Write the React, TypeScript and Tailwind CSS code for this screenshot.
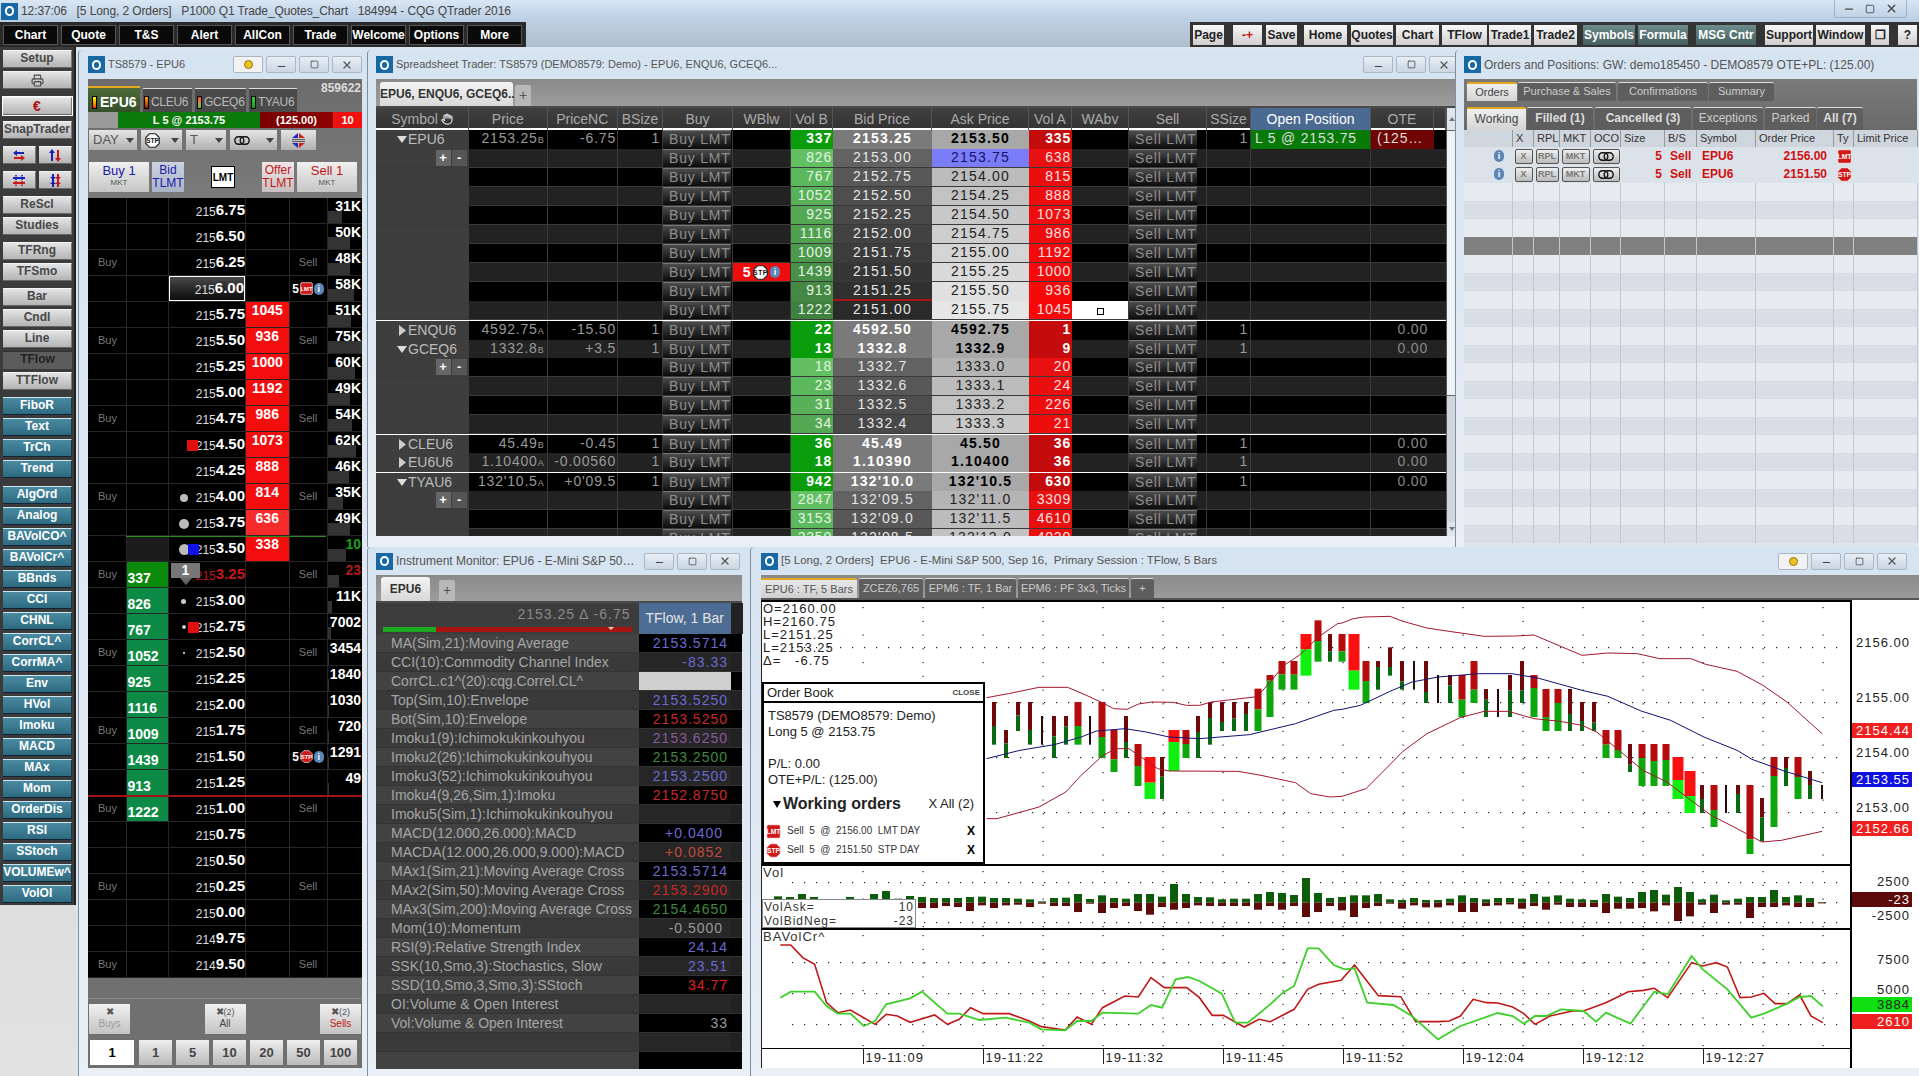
import { ReactNode } from 'react';
import { Printer, Minus, Square, X, Hand } from 'lucide-react';

// ---- small shared bits

const WinIcon = () => (
  <div className="w-[17px] h-[17px] bg-[#1769a6] flex items-center justify-center shrink-0">
    <div className="w-[9px] h-[10px] rounded-full border-2 border-white" />
  </div>
);

const TitleBtn = ({ children, light }: { children: ReactNode; light?: boolean }) => (
  <div className={`w-[30px] h-[17px] rounded-[2px] border border-[#aab6c4] flex items-center justify-center ${light ? 'bg-[#f2f2f2]' : 'bg-gradient-to-b from-[#e8eef5] to-[#cbd6e2]'}`}>
    {children}
  </div>
);

const WinButtons = ({ dot }: { dot?: boolean }) => (
  <div className="flex gap-[3px] shrink-0">
    {dot && (
      <TitleBtn light>
        <div className="w-[9px] h-[9px] rounded-full bg-[#f2c21c] border border-[#8a7420]" />
      </TitleBtn>
    )}
    <TitleBtn><Minus size={11} strokeWidth={2.5} className="text-[#444] mt-[3px]" /></TitleBtn>
    <TitleBtn><Square size={9} strokeWidth={2} className="text-[#444]" /></TitleBtn>
    <TitleBtn><X size={12} strokeWidth={2.5} className="text-[#555]" /></TitleBtn>
  </div>
);

const StopSign = ({ size = 13 }: { size?: number }) => (
  <svg width={size} height={size} viewBox="0 0 20 20" className="shrink-0">
    <polygon points="6,1 14,1 19,6 19,14 14,19 6,19 1,14 1,6" fill="#d01818" stroke="#fff" strokeWidth="1" />
    <text x="10" y="13.5" textAnchor="middle" fontSize="9" fontWeight="700" fill="#fff" fontFamily="Liberation Sans">STP</text>
  </svg>
);

const WhiteStop = ({ size = 15 }: { size?: number }) => (
  <svg width={size} height={size} viewBox="0 0 20 20" className="shrink-0">
    <polygon points="6,1 14,1 19,6 19,14 14,19 6,19 1,14 1,6" fill="#fff" stroke="#222" strokeWidth="1.5" />
    <text x="10" y="13.5" textAnchor="middle" fontSize="9" fontWeight="700" fill="#111" fontFamily="Liberation Sans">STP</text>
  </svg>
);

const LmtBadge = ({ size = 13 }: { size?: number }) => (
  <svg width={size} height={size} viewBox="0 0 20 20" className="shrink-0">
    <rect x="1" y="1" width="18" height="18" rx="2" fill="#d01818" stroke="#fff" strokeWidth="1" />
    <text x="10" y="13.5" textAnchor="middle" fontSize="9" fontWeight="700" fill="#fff" fontFamily="Liberation Sans">LMT</text>
  </svg>
);

const InfoDot = () => (
  <div className="w-[10px] h-[12px] rounded-full bg-[#5c86b4] text-white text-[9px] font-bold leading-[12px] text-center shrink-0">i</div>
);

const Chain = () => (
  <svg width="16" height="9" viewBox="0 0 16 9">
    <rect x="0.8" y="0.8" width="9" height="7.4" rx="3.6" fill="none" stroke="#111" strokeWidth="1.4" />
    <rect x="6.2" y="0.8" width="9" height="7.4" rx="3.6" fill="none" stroke="#111" strokeWidth="1.4" />
  </svg>
);

const SplitIcon = () => (
  <svg width="15" height="15" viewBox="0 0 15 15">
    <polygon points="1,5 7,5 7,0" fill="#2028c0" />
    <polygon points="8,0 8,5 14,5" fill="#d02020" />
    <rect x="1" y="6" width="13" height="1" fill="#555" />
    <rect x="1" y="8" width="13" height="1" fill="#555" />
    <polygon points="1,10 7,10 7,15" fill="#2028c0" />
    <polygon points="8,15 8,10 14,10" fill="#d02020" />
  </svg>
);

// ---- top bars

const leftTop = ['Chart', 'Quote', 'T&S', 'Alert', 'AllCon', 'Trade', 'Welcome', 'Options', 'More'];

const rightTop = [
  { t: 'Page', c: 'w-[31px] ml-[0px]' },
  { t: '-+', c: 'w-[29px] ml-[9px] text-[#c01010]' },
  { t: 'Save', c: 'w-[31px] ml-[4px]' },
  { t: 'Home', c: 'w-[43px] ml-[7px]' },
  { t: 'Quotes', c: 'w-[42px] ml-[4px]' },
  { t: 'Chart', c: 'w-[43px] ml-[3px]' },
  { t: 'TFlow', c: 'w-[45px] ml-[3px]' },
  { t: 'Trade1', c: 'w-[42px] ml-[2px]' },
  { t: 'Trade2', c: 'w-[43px] ml-[3px]' },
  { t: 'Symbols', c: 'w-[52px] ml-[6px] teal' },
  { t: 'Formula', c: 'w-[50px] ml-[3px] teal' },
  { t: 'MSG Cntr', c: 'w-[60px] ml-[8px] teal' },
  { t: 'Support', c: 'w-[48px] ml-[9px]' },
  { t: 'Window', c: 'w-[49px] ml-[3px]' },
  { t: '❐', c: 'w-[18px] ml-[6px]' },
  { t: '?', c: 'w-[19px] ml-[9px]' },
];

const TopBars = () => (
  <>
    <div className="h-[22px] bg-gradient-to-b from-[#d9e6f4] to-[#b9cde2] flex items-center pl-[1px] text-[12px] tracking-[-0.1px] text-[#444]">
      <WinIcon />
      <span className="ml-[3px] whitespace-pre">12:37:06   [5 Long, 2 Orders]   P1000 Q1 Trade_Quotes_Chart   184994 - CQG QTrader 2016</span>
      <div className="ml-auto mr-[12px] flex items-center gap-[10px] border border-[#9fb0c4] border-t-0 rounded-b-[3px] h-[18px] px-[8px] -mt-[4px] text-[#444]">
        <Minus size={12} strokeWidth={2.5} />
        <Square size={10} strokeWidth={2} />
        <X size={13} strokeWidth={2.5} />
      </div>
    </div>
    <div className="h-[25px] flex bg-[#c3d2e1]">
      <div className="w-[526px] bg-[#2a2a2a] flex items-center gap-[3px] pl-[3px]">
        {leftTop.map(t => (
          <div key={t} className="w-[55px] h-[20px] bg-[#0a0a0a] border border-[#555] text-white font-bold text-[12px] flex items-center justify-center">{t}</div>
        ))}
      </div>
      <div className="flex-1 bg-gradient-to-b from-[#bfcfe0] to-[#aebecd]" />
      <div className="w-[729px] bg-[#333] flex items-center pl-[3px]">
        {rightTop.map(b => {
          const teal = b.c.includes('teal');
          return (
            <div key={b.t} className={`${b.c} h-[20px] font-bold text-[12px] flex items-center justify-center whitespace-nowrap ${teal ? 'bg-gradient-to-b from-[#6e8c8c] to-[#465f5f] text-white' : 'bg-gradient-to-b from-[#f8f8f8] to-[#cfcfcf] text-[#222]'}`}>{b.t}</div>
          );
        })}
      </div>
    </div>
  </>
);

// ---- left side toolbar

const Arrow = ({ kind }: { kind: 'h' | 'v' | 'hx' | 'vx' }) => (
  <svg width="14" height="13" viewBox="0 0 14 13">
    {kind === 'h' && (
      <>
        <path d="M1 4 L5 1 V3 H12 V5 H5 V7 Z" fill="#1820b8" />
        <path d="M13 9 L9 6 V8 H2 V10 H9 V12 Z" fill="#c81818" />
      </>
    )}
    {kind === 'v' && (
      <>
        <path d="M4 0 L7 4 H5 V12 H3 V4 H1 Z" fill="#1820b8" />
        <path d="M10 13 L7 9 H9 V1 H11 V9 H13 Z" fill="#c81818" />
      </>
    )}
    {kind === 'hx' && (
      <>
        <rect x="1" y="3" width="12" height="2" fill="#1820b8" />
        <path d="M3 1 L5 6 H3 L5 1 Z M9 1 L11 6 H9 L11 1 Z" fill="#1820b8" />
        <rect x="1" y="8" width="12" height="2" fill="#c81818" />
        <path d="M3 7 L5 12 H3 L5 7 Z M9 7 L11 12 H9 L11 7 Z" fill="#c81818" />
      </>
    )}
    {kind === 'vx' && (
      <>
        <rect x="4" y="0" width="2" height="13" fill="#1820b8" />
        <path d="M2 3 H8 L5 6 Z M2 10 H8 L5 7 Z" fill="#1820b8" />
        <rect x="9" y="0" width="2" height="13" fill="#c81818" />
        <path d="M7 3 H13 L10 6 Z M7 10 H13 L10 7 Z" fill="#c81818" />
      </>
    )}
  </svg>
);

const grayBtn = 'bg-gradient-to-b from-[#e4e4e4] to-[#b4b4b4] text-[#484848] border-t border-[#f4f4f4] border-r border-r-[#777] border-b border-b-[#666]';
const tealBtn = 'bg-gradient-to-b from-[#4a8ba2] to-[#2d6a80] text-white border-t border-[#cfe6ee] border-r border-r-[#234] border-b border-b-[#123]';

const SideBtn = ({ label, mb, teal, dark }: { label: string; mb: string; teal?: boolean; dark?: boolean }) => (
  <div className={`h-[18px] w-[69px] font-bold text-[12px] leading-[15px] text-center whitespace-nowrap overflow-hidden ${mb} ${dark ? 'bg-[#5c5c5c] text-[#222] border-t border-[#333]' : teal ? tealBtn : grayBtn}`}>{label}</div>
);

const teals = ['FiboR', 'Text', 'TrCh', 'Trend'];
const teals2 = ['AlgOrd', 'Analog', 'BAVolCO^', 'BAVolCr^', 'BBnds', 'CCI', 'CHNL', 'CorrCL^', 'CorrMA^', 'Env', 'HVol', 'Imoku', 'MACD', 'MAx', 'Mom', 'OrderDis', 'RSI', 'SStoch', 'VOLUMEw^', 'VolOI'];

const SideBar = () => (
  <div className="w-[76px] shrink-0 flex flex-col bg-gradient-to-b from-[#c9c9c9] to-[#e2e2e2]">
    <div className="bg-[#3b3b3b] pl-[3px] pt-[3px] h-[858px] border-r-2 border-[#222]">
      <SideBtn label="Setup" mb="mb-[3px]" />
      <div className={`h-[18px] w-[69px] flex items-center justify-center mb-[8px] ${grayBtn}`}><Printer size={13} /></div>
      <div className={`h-[18px] w-[69px] flex items-center justify-center mb-[6px] ${grayBtn} font-bold text-[#b01010] text-[14px] outline outline-1 outline-white`}>€</div>
      <SideBtn label="SnapTrader" mb="mb-[7px]" />
      <div className="flex gap-[3px] mb-[7px]">
        <div className={`h-[18px] w-[33px] flex items-center justify-center ${grayBtn}`}><Arrow kind="h" /></div>
        <div className={`h-[18px] w-[33px] flex items-center justify-center ${grayBtn}`}><Arrow kind="v" /></div>
      </div>
      <div className="flex gap-[3px] mb-[7px]">
        <div className={`h-[18px] w-[33px] flex items-center justify-center ${grayBtn}`}><Arrow kind="hx" /></div>
        <div className={`h-[18px] w-[33px] flex items-center justify-center ${grayBtn}`}><Arrow kind="vx" /></div>
      </div>
      <SideBtn label="ReScl" mb="mb-[3px]" />
      <SideBtn label="Studies" mb="mb-[7px]" />
      <SideBtn label="TFRng" mb="mb-[3px]" />
      <SideBtn label="TFSmo" mb="mb-[7px]" />
      <SideBtn label="Bar" mb="mb-[3px]" />
      <SideBtn label="Cndl" mb="mb-[3px]" />
      <SideBtn label="Line" mb="mb-[3px]" />
      <SideBtn label="TFlow" mb="mb-[3px]" dark />
      <SideBtn label="TTFlow" mb="mb-[7px]" />
      {teals.map((t, i) => <SideBtn key={t} label={t} mb={i === 3 ? 'mb-[8px]' : 'mb-[3px]'} teal />)}
      {teals2.map(t => <SideBtn key={t} label={t} mb="mb-[3px]" teal />)}
    </div>
  </div>
);

// ---- price ladder

type LadderRow = {
  hi: string; lo: string; vol: string; bar: number;
  ask?: string; bid?: string; side?: boolean;
};

const ladder: LadderRow[] = [
  { hi: '215', lo: '6.75', vol: '31K', bar: 14 },
  { hi: '215', lo: '6.50', vol: '50K', bar: 22 },
  { hi: '215', lo: '6.25', vol: '48K', bar: 22, side: true },
  { hi: '215', lo: '6.00', vol: '58K', bar: 26 },
  { hi: '215', lo: '5.75', vol: '51K', bar: 23, ask: '1045' },
  { hi: '215', lo: '5.50', vol: '75K', bar: 34, ask: '936', side: true },
  { hi: '215', lo: '5.25', vol: '60K', bar: 27, ask: '1000' },
  { hi: '215', lo: '5.00', vol: '49K', bar: 22, ask: '1192' },
  { hi: '215', lo: '4.75', vol: '54K', bar: 24, ask: '986', side: true },
  { hi: '215', lo: '4.50', vol: '62K', bar: 28, ask: '1073' },
  { hi: '215', lo: '4.25', vol: '46K', bar: 21, ask: '888' },
  { hi: '215', lo: '4.00', vol: '35K', bar: 15, ask: '814', side: true },
  { hi: '215', lo: '3.75', vol: '49K', bar: 22, ask: '636' },
  { hi: '215', lo: '3.50', vol: '10', bar: 18, ask: '338' },
  { hi: '215', lo: '3.25', vol: '23', bar: 11, bid: '337', side: true },
  { hi: '215', lo: '3.00', vol: '11K', bar: 4, bid: '826' },
  { hi: '215', lo: '2.75', vol: '7002', bar: 3, bid: '767' },
  { hi: '215', lo: '2.50', vol: '3454', bar: 1, bid: '1052', side: true },
  { hi: '215', lo: '2.25', vol: '1840', bar: 1, bid: '925' },
  { hi: '215', lo: '2.00', vol: '1030', bar: 1, bid: '1116' },
  { hi: '215', lo: '1.75', vol: '720', bar: 1, bid: '1009', side: true },
  { hi: '215', lo: '1.50', vol: '1291', bar: 1, bid: '1439' },
  { hi: '215', lo: '1.25', vol: '49', bar: 1, bid: '913' },
  { hi: '215', lo: '1.00', vol: '', bar: 0, bid: '1222', side: true },
  { hi: '215', lo: '0.75', vol: '', bar: 0 },
  { hi: '215', lo: '0.50', vol: '', bar: 0 },
  { hi: '215', lo: '0.25', vol: '', bar: 0, side: true },
  { hi: '215', lo: '0.00', vol: '', bar: 0 },
  { hi: '214', lo: '9.75', vol: '', bar: 0 },
  { hi: '214', lo: '9.50', vol: '', bar: 0, side: true },
];

const Mark = ({ i }: { i: number }) => {
  if (i === 9) return <div className="absolute left-[18px] top-[8px] w-[11px] h-[11px] bg-[#e01010]" />;
  if (i === 11) return <div className="absolute left-[11px] top-[10px] w-[8px] h-[8px] rounded-full bg-[#bbb]" />;
  if (i === 12) return <div className="absolute left-[10px] top-[9px] w-[10px] h-[10px] rounded-full bg-[#bbb]" />;
  if (i === 13)
    return (
      <>
        <div className="absolute left-[10px] top-[8px] w-[11px] h-[11px] rounded-full bg-[#bbb]" />
        <div className="absolute left-[19px] top-[8px] w-[11px] h-[11px] bg-[#1010e8]" />
      </>
    );
  if (i === 14)
    return (
      <div className="absolute left-[2px] top-[1px] flex flex-col items-center w-[29px]">
        <div className="w-[29px] h-[15px] bg-[#777] text-white font-bold text-[14px] leading-[15px] text-center">1</div>
        <div className="w-0 h-0 border-l-[6px] border-r-[6px] border-t-[7px] border-l-transparent border-r-transparent border-t-[#666]" />
      </div>
    );
  if (i === 15) return <div className="absolute left-[12px] top-[11px] w-[5px] h-[5px] rounded-full bg-[#ccc]" />;
  if (i === 16)
    return (
      <>
        <div className="absolute left-[13px] top-[11px] w-[4px] h-[4px] rounded-full bg-[#ccc]" />
        <div className="absolute left-[19px] top-[8px] w-[11px] h-[11px] bg-[#e01010]" />
      </>
    );
  if (i === 17) return <div className="absolute left-[14px] top-[12px] w-[2px] h-[2px] bg-[#bbb]" />;
  return null;
};

const LadderCellRow = ({ r, i }: { r: LadderRow; i: number }) => {
  const askBg = i === 12 ? 'bg-[#f52a2a]' : 'bg-[#f40d0d]';
  return (
    <div className="grid grid-cols-[38.5px_42.5px_76px_43.5px_38px_35.5px] h-[26px] bg-black border-b border-[#262626]">
      <div className={`border-r border-[#262626] flex items-center pl-[10px] text-[11px] text-[#777] ${i === 13 ? 'bg-black' : ''}`}>{r.side ? 'Buy' : ''}</div>
      <div className={`border-r border-[#262626] flex items-end ${r.bid ? (i === 14 ? 'bg-[#0a8a0a]' : 'bg-[#0d8a45]') : i === 13 ? 'bg-[#1c1c1c]' : ''}`}>
        {r.bid && <span className="pl-[1px] text-white font-bold text-[14px] leading-[18px]">{r.bid}</span>}
      </div>
      <div className={`relative flex items-center justify-end whitespace-nowrap ${i === 3 ? 'border border-white bg-gradient-to-b from-[#4a4a4a] to-[#0c0c0c]' : ''}`}>
        <Mark i={i} />
        <span className={`text-[12px] mt-[2px] ${i === 14 ? 'text-[#c01818]' : 'text-[#ddd]'}`}>{r.hi}</span>
        <span className={`font-bold text-[15px] ${i === 14 ? 'text-[#c01818]' : 'text-white'}`}>{r.lo}</span>
      </div>
      <div className={`border-l border-[#262626] flex justify-center ${r.ask ? askBg : ''}`}>
        {r.ask && <span className="text-white font-bold text-[14px] leading-[17px]">{r.ask}</span>}
      </div>
      <div className="border-l border-[#262626] flex items-center justify-center gap-[1px] text-[11px] text-[#777]">
        {i === 3 ? (
          <><span className="text-white font-bold text-[12px]">5</span><LmtBadge /><InfoDot /></>
        ) : i === 21 ? (
          <><span className="text-white font-bold text-[12px]">5</span><StopSign /><InfoDot /></>
        ) : r.side ? 'Sell' : ''}
      </div>
      <div className="relative border-l border-[#262626] text-right pr-[1px]">
        {r.bar > 0 && <div className="absolute left-0 bottom-0 h-[12px] bg-[#333]" style={{ width: r.bar }} />}
        <span className={`relative font-bold text-[14px] leading-[17px] block ${i === 13 ? 'text-[#18a018]' : i === 14 ? 'text-[#b01818]' : 'text-white'}`}>{r.vol}</span>
      </div>
    </div>
  );
};

const Traffic = ({ c }: { c: string }) => <div className={`w-[5px] h-[13px] border border-black ${c}`} />;

const SmallSelect = ({ w, children }: { w: string; children: ReactNode }) => (
  <div className={`${w} h-[20px] bg-gradient-to-b from-[#e6e6e6] to-[#b0b0b0] flex items-center justify-between pl-[4px] pr-[3px] text-[13px] text-[#555]`}>
    {children}
    <div className="w-0 h-0 border-l-[4px] border-r-[4px] border-t-[5px] border-l-transparent border-r-transparent border-t-[#444]" />
  </div>
);

const ClearBtn = ({ label, w, count, labelC }: { label: string; w: string; count?: boolean; labelC: string }) => (
  <div className={`${w} h-[30px] bg-gradient-to-b from-[#f0f0f0] to-[#c4c4c4] flex flex-col items-center text-[10px] leading-[12px] pt-[2px]`}>
    <div className="text-[#555]">✖{count && <span className="text-[9px]">(2)</span>}</div>
    <div className={labelC}>{label}</div>
  </div>
);

const TradeWindow = () => (
  <div className="flex flex-col h-full">
    <div className="h-[119px] bg-gradient-to-b from-[#6c6c6c] to-[#7a7a7a] relative">
      <div className="absolute right-[1px] top-[1px] text-[12px] text-[#ddd] font-bold leading-[16px]">859622</div>
      <div className="flex h-[33px] items-end gap-[3px] pt-[7px]">
        <div className="w-[52px] h-[26px] bg-gradient-to-b from-[#4d6a3a] to-[#36502a] border-t-2 border-[#e2a820] flex items-center gap-[3px] pl-[4px] pt-[4px] text-white font-bold text-[14px]">
          <Traffic c="bg-gradient-to-b from-[#ff0] to-[#f00]" />EPU6
        </div>
        <div className="w-[49px] h-[24px] bg-[#4a4a4a] border-t border-[#ddd] flex items-center gap-[2px] pl-[1px] pt-[3px] text-[#bbb] text-[12px] tracking-[-0.3px]"><Traffic c="bg-gradient-to-b from-[#fa0] to-[#a00]" />CLEU6</div>
        <div className="w-[51px] h-[24px] bg-[#4a4a4a] border-t border-[#ddd] flex items-center gap-[2px] pl-[2px] pt-[3px] text-[#bbb] text-[12px] tracking-[-0.3px]"><Traffic c="bg-gradient-to-b from-[#f33] to-[#3c3]" />GCEQ6</div>
        <div className="w-[48px] h-[24px] bg-[#4a4a4a] border-t border-[#ddd] flex items-center gap-[2px] pl-[2px] pt-[3px] text-[#bbb] text-[12px] tracking-[-0.3px]"><Traffic c="bg-gradient-to-b from-[#3c3] to-[#0a0]" />TYAU6</div>
      </div>
      <div className="flex h-[16px] text-[11px] font-bold text-white leading-[16px]">
        <div className="w-[30px] bg-[#9a9a9a]" />
        <div className="w-[142px] bg-[#0a7a0a] text-center">L 5 @ 2153.75</div>
        <div className="w-[73px] bg-gradient-to-r from-[#7a0000] to-[#8c0000] text-center">(125.00)</div>
        <div className="w-[29px] bg-[#f01010] text-center">10</div>
      </div>
      <div className="flex gap-[4px] mt-[2px] px-[1px] h-[20px]">
        <SmallSelect w="w-[48px]">DAY</SmallSelect>
        <SmallSelect w="w-[41px]"><WhiteStop /></SmallSelect>
        <SmallSelect w="w-[40px]">T</SmallSelect>
        <SmallSelect w="w-[47px]"><Chain /></SmallSelect>
        <div className="w-[35px] bg-gradient-to-b from-[#e6e6e6] to-[#b0b0b0] flex items-center justify-center"><SplitIcon /></div>
      </div>
      <div className="mt-[12px] flex px-[1px] h-[30px] items-stretch">
        <div className="w-[60px] bg-gradient-to-b from-[#f0f0f0] to-[#c6c6c6] text-center text-[13px] leading-[14px] text-[#1820a8] pt-[2px]">Buy 1<div className="text-[8px] leading-[10px] text-[#555]">MKT</div></div>
        <div className="w-[32px] ml-[3px] bg-gradient-to-b from-[#cdd2e0] to-[#aab2c6] text-center text-[12px] leading-[13px] text-[#1820a8] pt-[2px]">Bid<div>TLMT</div></div>
        <div className="w-[24px] h-[22px] ml-[27px] self-center bg-white text-black text-[10px] font-bold text-center leading-[22px] border border-black">LMT</div>
        <div className="w-[32px] ml-[27px] bg-gradient-to-b from-[#f0e8e8] to-[#c8c0c0] text-center text-[12px] leading-[13px] text-[#c01818] pt-[2px]">Offer<div>TLMT</div></div>
        <div className="w-[60px] ml-[3px] bg-gradient-to-b from-[#f0f0f0] to-[#c6c6c6] text-center text-[13px] leading-[14px] text-[#c01818] pt-[2px]">Sell 1<div className="text-[8px] leading-[10px] text-[#555]">MKT</div></div>
      </div>
    </div>
    <div className="relative">
      {ladder.map((r, i) => <LadderCellRow key={i} r={r} i={i} />)}
      <div className="absolute left-[38px] right-[36px] top-[338px] h-[1px] bg-[#2a8a1a]" />
      <div className="absolute left-0 right-0 top-[597px] h-[2px] bg-[#a01414]" />
    </div>
    <div className="flex-1 bg-[#707070] relative">
      <div className="absolute left-0 right-0 top-[20px] h-[1px] bg-[#8a8a8a]" />
      <div className="flex justify-between px-[1px] pt-[26px]">
        <ClearBtn label="Buys" w="w-[41px]" labelC="text-[#999]" />
        <ClearBtn label="All" w="w-[41px]" count labelC="text-[#444]" />
        <ClearBtn label="Sells" w="w-[41px]" count labelC="text-[#c01818]" />
      </div>
      <div className="flex pl-[2px] mt-[6px] text-[13px] font-bold text-[#444]">
        <div className="w-[44px] h-[25px] bg-white text-black flex items-center justify-center">1</div>
        {['1', '5', '10', '20', '50', '100'].map((n, i) => (
          <div key={i} className={`w-[33px] h-[25px] ${i === 0 ? 'ml-[5px]' : 'ml-[4px]'} bg-gradient-to-b from-[#eee] to-[#bbb] flex items-center justify-center`}>{n}</div>
        ))}
      </div>
    </div>
  </div>
);

// ---- spreadsheet

type SheetRow = {
  sym?: string; open?: boolean; plus?: boolean; price?: ReactNode; nc?: string; one?: boolean;
  vb: string; bid: string; ask: string; va: string; level: number; top?: boolean; line?: boolean;
};

const steps = (items: [string, string, string, string][], head: Partial<SheetRow>) =>
  items.map((x, i): SheetRow => ({
    vb: x[0], bid: x[1], ask: x[2], va: x[3], level: i, top: i === 0, plus: i === 1 && head.open,
    ...(i === 0 ? head : {}),
  }));

const Sfx = ({ v, s }: { v: string; s: string }) => <>{v}<span className="text-[9px]">{s}</span></>;

const sheet: SheetRow[] = [
  ...steps([
    ['337', '2153.25', '2153.50', '335'], ['826', '2153.00', '2153.75', '638'], ['767', '2152.75', '2154.00', '815'],
    ['1052', '2152.50', '2154.25', '888'], ['925', '2152.25', '2154.50', '1073'], ['1116', '2152.00', '2154.75', '986'],
    ['1009', '2151.75', '2155.00', '1192'], ['1439', '2151.50', '2155.25', '1000'], ['913', '2151.25', '2155.50', '936'],
    ['1222', '2151.00', '2155.75', '1045'],
  ], { sym: 'EPU6', open: true, price: <Sfx v="2153.25" s="B" />, nc: '-6.75', one: true }),
  ...steps([['22', '4592.50', '4592.75', '1']], { sym: 'ENQU6', price: <Sfx v="4592.75" s="A" />, nc: '-15.50', one: true, line: true }),
  ...steps([
    ['13', '1332.8', '1332.9', '9'], ['18', '1332.7', '1333.0', '20'], ['23', '1332.6', '1333.1', '24'],
    ['31', '1332.5', '1333.2', '226'], ['34', '1332.4', '1333.3', '21'],
  ], { sym: 'GCEQ6', open: true, price: <Sfx v="1332.8" s="B" />, nc: '+3.5', one: true, line: true }),
  ...steps([['36', '45.49', '45.50', '36']], { sym: 'CLEU6', price: <Sfx v="45.49" s="B" />, nc: '-0.45', one: true, line: true }),
  ...steps([['18', '1.10390', '1.10400', '36']], { sym: 'EU6U6', price: <Sfx v="1.10400" s="A" />, nc: '-0.00560', one: true }),
  ...steps([
    ['942', "132'10.0", "132'10.5", '630'], ['2847', "132'09.5", "132'11.0", '3309'], ['3153', "132'09.0", "132'11.5", '4610'], ['3350', "132'08.5", "132'12.0", '4020'],
  ], { sym: 'TYAU6', open: true, price: <Sfx v="132'10.5" s="A" />, nc: "+0'09.5", one: true, line: true }),
];

const bidBg = ['bg-[#7a7a7a]', 'bg-[#626262]', 'bg-[#585858]', 'bg-[#4e4e4e]', 'bg-[#484848]', 'bg-[#424242]', 'bg-[#3c3c3c]', 'bg-[#363636]', 'bg-[#303030]', 'bg-[#2a2a2a]'];
const askBg = ['bg-[#a8a8a8]', 'bg-[#b4b4b4]', 'bg-[#bcbcbc]', 'bg-[#c2c2c2]', 'bg-[#c8c8c8]', 'bg-[#cecece]', 'bg-[#d4d4d4]', 'bg-[#dadada]', 'bg-[#e0e0e0]', 'bg-[#e6e6e6]'];
const vbBg = ['bg-[#0a9c0a]', 'bg-[#62c062]', 'bg-[#5cb85c]', 'bg-[#58b058]', 'bg-[#54a854]', 'bg-[#50a050]', 'bg-[#4c984c]', 'bg-[#489048]', 'bg-[#448844]', 'bg-[#408040]'];
const vaBg = ['bg-[#c40c0c]', 'bg-[#e81010]', 'bg-[#ea0f0f]', 'bg-[#ec0e0e]', 'bg-[#ee0d0d]', 'bg-[#f00c0c]', 'bg-[#f20b0b]', 'bg-[#f40a0a]', 'bg-[#f60909]', 'bg-[#f80808]'];

const sheetCols = 'grid grid-cols-[93px_78.5px_70.5px_45px_70px_58px_42px_99px_97px_43px_57px_78px_44px_120px_63px_12px]';

const sheetHead = ['Symbol', 'Price', 'PriceNC', 'BSize', 'Buy', 'WBlw', 'Vol B', 'Bid Price', 'Ask Price', 'Vol A', 'WAbv', 'Sell', 'SSize', 'Open Position', 'OTE', ''];

const Tri = ({ open }: { open?: boolean }) => (
  <svg width="10" height="11" viewBox="0 0 10 11" className="shrink-0">
    {open ? <polygon points="0,2 10,2 5,9" fill="#ddd" /> : <polygon points="2,0 9,5.5 2,11" fill="#ccc" />}
  </svg>
);

const LmtBtn = ({ t }: { t: string }) => (
  <div className="h-full w-[68px] bg-gradient-to-b from-[#4c4c4c] to-[#0c0c0c] border-t border-[#777] text-[#8e8e8e] text-[14px] leading-[16px] pl-[6px] whitespace-nowrap">{t}</div>
);

const SheetLine = ({ r, i }: { r: SheetRow; i: number }) => {
  const base = i % 2 === 0 ? 'bg-black' : 'bg-[#222]';
  const gridL = 'border-r border-[#3a3a3a]';
  const isMine = r.top && r.sym === 'EPU6';
  return (
    <div className={`${sheetCols} h-[19px] text-[14px] leading-[17px] tracking-[0.8px] ${r.line ? 'border-t border-white' : 'border-b border-[#3a3a3a]'}`}>
      <div className="bg-[#3e3e3e] flex items-center relative">
        {r.sym && (
          <div className="flex items-center gap-[1px] pl-[21px] text-[#bbb] tracking-normal"><Tri open={r.open} />{r.sym}</div>
        )}
        {r.plus && (
          <div className="absolute right-[2px] top-[1px] flex gap-[1px] text-white text-[13px] font-bold leading-[16px] text-center">
            <div className="w-[15px] h-[16px] bg-[#666]">+</div>
            <div className="w-[15px] h-[16px] bg-[#555]">-</div>
          </div>
        )}
      </div>
      <div className={`${base} ${gridL} text-right pr-[2px] text-[#999] whitespace-nowrap`}>{r.price}</div>
      <div className={`${base} ${gridL} text-right pr-[1px] text-[#999] whitespace-nowrap`}>{r.nc}</div>
      <div className={`${base} ${gridL} text-right pr-[2px] text-[#999]`}>{r.one ? '1' : ''}</div>
      <div className={`${base} ${gridL}`}><LmtBtn t="Buy LMT" /></div>
      <div className={`${r.sym === undefined && r.bid === '2151.50' ? 'bg-[#f00c0c]' : base} ${gridL} flex items-center justify-center gap-[2px]`}>
        {r.bid === '2151.50' && <><span className="text-white font-bold">5</span><WhiteStop /><InfoDot /></>}
      </div>
      <div className={`${vbBg[r.level]} text-right pr-[1px] ${r.top ? 'text-white font-bold' : 'text-[#e4f4e4]'}`}>{r.vb}</div>
      <div className={`${bidBg[r.level]} text-center whitespace-nowrap tracking-[1.2px] ${r.top ? 'text-white font-bold' : 'text-[#e6e6e6]'} ${r.bid === '2151.25' ? 'border-b-2 border-[#a81414]' : ''}`}>{r.bid}</div>
      <div className={`${r.bid === '2153.00' ? 'bg-[#7a7cf8] text-[#141470]' : askBg[r.level]} text-center whitespace-nowrap tracking-[1.2px] ${r.top ? 'text-black font-bold' : r.bid === '2153.00' ? '' : 'text-[#222]'}`}>{r.ask}</div>
      <div className={`${vaBg[r.level]} text-right pr-[1px] ${r.top ? 'text-white font-bold' : 'text-[#ffe0e0]'}`}>{r.va}</div>
      <div className={`${r.bid === '2151.00' ? 'bg-white' : base} ${gridL} flex items-center justify-center`}>
        {r.bid === '2151.00' && <div className="w-[7px] h-[7px] border border-black mt-[3px]" />}
      </div>
      <div className={`${base} ${gridL}`}><LmtBtn t="Sell LMT" /></div>
      <div className={`${base} ${gridL} text-right pr-[2px] text-[#999]`}>{r.one ? '1' : ''}</div>
      <div className={`${isMine ? 'bg-[#087a08] text-[#ddd]' : base} ${gridL} whitespace-nowrap pl-[4px]`}>{isMine ? 'L 5 @ 2153.75' : ''}</div>
      <div className={`${isMine ? 'bg-[#6e0404] text-[#ddd] pl-[6px]' : `${base} text-right pr-[6px] text-[#888]`} whitespace-nowrap overflow-hidden`}>{isMine ? '(125…' : r.one ? '0.00' : ''}</div>
      <div className={base} />
    </div>
  );
};

const TabAdd = () => <div className="w-[16px] h-[21px] bg-[#b8b8b8] text-[#555] text-[14px] leading-[21px] text-center rounded-t-[2px]">+</div>;

const SheetScroll = () => (
  <div className="w-[10px] flex flex-col bg-[#dfe5ec] border-l border-[#555]">
    <div className="h-[22px] flex items-center justify-center">
      <div className="w-0 h-0 border-l-[3px] border-r-[3px] border-b-[4px] border-l-transparent border-r-transparent border-b-[#777]" />
    </div>
    <div className="h-[266px] bg-[#eef1f5] border-y border-[#666]" />
    <div className="flex-1 bg-[#cfd6de]" />
    <div className="h-[14px] flex items-center justify-center">
      <div className="w-0 h-0 border-l-[3px] border-r-[3px] border-t-[4px] border-l-transparent border-r-transparent border-t-[#777]" />
    </div>
  </div>
);

const SheetWindow = () => (
  <div className="flex flex-col h-full">
    <div className="h-[29px] bg-gradient-to-b from-[#8a8a8a] to-[#9c9c9c] border-b-2 border-[#4a4a4a] flex items-end gap-[2px] pl-[4px]">
      <div className="w-[133px] h-[24px] bg-gradient-to-b from-[#f4f4f4] to-[#d8d8d8] rounded-t-[3px] text-[#333] font-bold text-[12px] leading-[24px] text-center whitespace-nowrap">EPU6, ENQU6, GCEQ6...</div>
      <TabAdd />
    </div>
    <div className="flex w-[1080px]">
      <div className="w-[1070px]">
        <div className={`${sheetCols} h-[22px] bg-gradient-to-b from-[#404040] to-[#333] text-[14px] leading-[22px] text-[#aaa] text-center border-b-2 border-white whitespace-nowrap`}>
          {sheetHead.map((h, i) => (
            <div key={i} className={`border-r border-[#555] flex items-center justify-center gap-[3px] ${h === 'Open Position' ? 'bg-[#4a6a92] text-white' : ''}`}>
              {h}{i === 0 && <Hand size={12} className="text-[#ddd]" strokeWidth={2.5} />}
            </div>
          ))}
        </div>
        <div className="h-[406px] overflow-hidden relative">
          {sheet.map((r, i) => <SheetLine key={i} r={r} i={i} />)}
        </div>
      </div>
      <SheetScroll />
    </div>
  </div>
);

// ---- orders and positions

const orderCols = 'grid grid-cols-[49px_21px_26px_31px_30px_44px_32px_59px_78px_20px_64px]';
const orderHead = ['', 'X', 'RPL', 'MKT', 'OCO', 'Size', 'B/S', 'Symbol', 'Order Price', 'Ty', 'Limit Price'];

const MiniBtn = ({ t }: { t: ReactNode }) => (
  <div className="h-[15px] w-[calc(100%-3px)] mx-auto border border-[#555] rounded-[2px] bg-gradient-to-b from-[#f0f0f0] to-[#bbb] text-[#777] text-[9px] leading-[13px] text-center flex items-center justify-center">{t}</div>
);

const OrderRow = ({ px, stp }: { px: string; stp?: boolean }) => (
  <div className={`${orderCols} h-[18px] bg-[#dce2e9] items-center text-[12px] font-bold text-[#d01010]`}>
    <div className="flex justify-end pr-[9px]"><InfoDot /></div>
    <MiniBtn t="X" /><MiniBtn t="RPL" /><MiniBtn t="MKT" /><MiniBtn t={<Chain />} />
    <div className="text-right pr-[3px]">5</div>
    <div className="pl-[5px]">Sell</div>
    <div className="pl-[5px]">EPU6</div>
    <div className="text-right pr-[7px]">{px}</div>
    <div className="flex justify-center">{stp ? <StopSign size={15} /> : <LmtBadge size={15} />}</div>
    <div />
  </div>
);

const otabsA = [
  { t: 'Orders', c: 'w-[50px] bg-gradient-to-b from-[#efefef] to-[#d4d4d4] text-[#444] border-t-2 border-[#e2a820]' },
  { t: 'Purchase & Sales', c: 'w-[98px] ml-[1px] bg-[#5e5e5e] text-[#ccc] border-t border-[#ddd]' },
  { t: 'Confirmations', c: 'w-[90px] ml-[2px] bg-[#5e5e5e] text-[#ccc] border-t border-[#ddd]' },
  { t: 'Summary', c: 'w-[65px] ml-[1px] bg-[#5e5e5e] text-[#ccc] border-t border-[#ddd]' },
];
const otabsB = [
  { t: 'Working', c: 'w-[59px] bg-gradient-to-b from-[#efefef] to-[#d4d4d4] text-[#444] border-t-2 border-[#e2a820]' },
  { t: 'Filled (1)', c: 'w-[66px] ml-[1px] bg-[#5e5e5e] text-[#ddd] font-bold border-t border-[#ddd]' },
  { t: 'Cancelled (3)', c: 'w-[96px] ml-[2px] bg-[#5e5e5e] text-[#ddd] font-bold border-t border-[#ddd]' },
  { t: 'Exceptions', c: 'w-[70px] ml-[2px] bg-[#5e5e5e] text-[#ccc] border-t border-[#ddd]' },
  { t: 'Parked', c: 'w-[51px] ml-[2px] bg-[#5e5e5e] text-[#ccc] border-t border-[#ddd]' },
  { t: 'All (7)', c: 'w-[46px] ml-[1px] bg-[#5e5e5e] text-[#ddd] font-bold border-t border-[#ddd]' },
];

const OrdersWindow = () => (
  <div className="flex flex-col h-full bg-[#dfe5ec]">
    <div className="h-[51px] bg-gradient-to-b from-[#7a7a7a] to-[#6a6a6a] pl-[3px] text-[11px] whitespace-nowrap">
      <div className="flex h-[25px] pt-[3px]">
        {otabsA.map(t => <div key={t.t} className={`${t.c} h-[19px] leading-[17px] text-center rounded-t-[2px]`}>{t.t}</div>)}
      </div>
      <div className="flex h-[26px] pt-[3px] text-[12px]">
        {otabsB.map(t => <div key={t.t} className={`${t.c} h-[23px] leading-[20px] text-center rounded-t-[2px]`}>{t.t}</div>)}
      </div>
    </div>
    <div className={`${orderCols} h-[17px] bg-[#cfd5dc] text-[#333] text-[11px] leading-[17px] whitespace-nowrap`}>
      {orderHead.map((h, i) => <div key={i} className="border-r border-[#999] pl-[3px]">{h}</div>)}
    </div>
    <OrderRow px="2156.00" />
    <OrderRow px="2151.50" stp />
    {Array.from({ length: 20 }).map((_, i) => (
      <div key={i} className={`${orderCols} h-[18px] ${i === 3 ? 'bg-[#808080]' : i % 2 === 0 ? 'bg-[#e6ebf0]' : 'bg-[#d8dee5]'}`}>
        {orderHead.map((_h, j) => <div key={j} className="border-r border-[#c2c8cf]" />)}
      </div>
    ))}
  </div>
);

// ---- instrument monitor

const studies: [string, string, string][] = [
  ['MA(Sim,21):Moving Average', '2153.5714', 'text-[#6a6ad0]'],
  ['CCI(10):Commodity Channel Index', '-83.33', 'text-[#6a6ad0]'],
  ['CorrCL.c1^(20):cqg.Correl.CL^', '', ''],
  ['Top(Sim,10):Envelope', '2153.5250', 'text-[#6a6ad0]'],
  ['Bot(Sim,10):Envelope', '2153.5250', 'text-[#c82828]'],
  ['Imoku1(9):Ichimokukinkouhyou', '2153.6250', 'text-[#8a5a9c]'],
  ['Imoku2(26):Ichimokukinkouhyou', '2153.2500', 'text-[#3e8a3e]'],
  ['Imoku3(52):Ichimokukinkouhyou', '2153.2500', 'text-[#6a6ad0]'],
  ['Imoku4(9,26,Sim,1):Imoku', '2152.8750', 'text-[#c82828]'],
  ['Imoku5(Sim,1):Ichimokukinkouhyou', '', ''],
  ['MACD(12.000,26.000):MACD', '+0.0400 ', 'text-[#6a6ad0]'],
  ['MACDA(12.000,26.000,9.000):MACD', '+0.0852 ', 'text-[#c24a3a]'],
  ['MAx1(Sim,21):Moving Average Cross', '2153.5714', 'text-[#6a6ad0]'],
  ['MAx2(Sim,50):Moving Average Cross', '2153.2900', 'text-[#c82828]'],
  ['MAx3(Sim,200):Moving Average Cross', '2154.4650', 'text-[#3e8a3e]'],
  ['Mom(10):Momentum', '-0.5000 ', 'text-[#999]'],
  ['RSI(9):Relative Strength Index', '24.14', 'text-[#6a6ad0]'],
  ['SSK(10,Smo,3):Stochastics, Slow', '23.51', 'text-[#6a6ad0]'],
  ['SSD(10,Smo,3,Smo,3):SStoch', '34.77', 'text-[#e02020]'],
  ['OI:Volume & Open Interest', '', ''],
  ['Vol:Volume & Open Interest', '33', 'text-[#999]'],
  ['', '', ''],
  ['', '', ''],
];

const MonitorWindow = () => (
  <div className="flex flex-col h-full">
    <div className="h-[28px] bg-gradient-to-b from-[#8a8a8a] to-[#9c9c9c] border-b-2 border-[#4a4a4a] flex items-end gap-[9px] pl-[5px]">
      <div className="w-[49px] h-[24px] bg-gradient-to-b from-[#f4f4f4] to-[#d8d8d8] rounded-t-[3px] text-[#333] font-bold text-[12px] leading-[24px] text-center">EPU6</div>
      <TabAdd />
    </div>
    <div className="grid grid-cols-[262.5px_92.5px_12px] h-[31px] bg-[#3c3c3c]">
      <div className="relative text-[#8a8a8a] text-[14px] tracking-[1px] text-right pr-[8px] leading-[22px]">
        2153.25 Δ -6.75
        <div className="absolute left-[7px] right-[7px] bottom-[2px] h-[5px] flex">
          <div className="w-[53px] bg-[#1ea81e]" />
          <div className="flex-1 bg-[#a81414] relative">
            <div className="absolute right-[18px] top-0 w-0 h-0 border-l-[3px] border-r-[3px] border-t-[3px] border-l-transparent border-r-transparent border-t-[#ffd0a0]" />
          </div>
        </div>
      </div>
      <div className="bg-[#4c6c94] text-[#e4e4e4] text-[14px] leading-[31px] text-center whitespace-nowrap">TFlow, 1 Bar</div>
      <div className="bg-[#222]" />
    </div>
    <div className="flex-1 overflow-hidden">
      {studies.map((s, i) => (
        <div key={i} className={`grid grid-cols-[262.5px_92.5px_12px] h-[19px] text-[14px] leading-[18px] border-b border-[#333] ${i % 2 === 0 ? 'bg-[#424242]' : 'bg-[#3a3a3a]'}`}>
          <div className="pl-[15px] text-[#a6a6a6] whitespace-nowrap overflow-hidden">{s[0]}</div>
          <div className={`${i === 2 ? 'bg-[#cfcfcf]' : i % 2 === 0 ? 'bg-black' : 'bg-[#262626]'} ${s[2]} text-right pr-[3px] tracking-[1px] whitespace-pre`}>{s[1]}</div>
          <div className={i % 2 === 0 ? 'bg-black' : 'bg-[#222]'} />
        </div>
      ))}
    </div>
  </div>
);

// ---- chart drawings. numbers below were read off the picture, hence the odd scale helpers

// [top, split, bottom, width] in crop coordinates (y/3 - 50 gives svg y)
const bars: [number, number, number, number][] = [
  [450, 522, 578, 4], [534, 574, 618, 4], [450, 490, 537, 4], [450, 534, 578, 4], [492, 578, 578, 2], [492, 553, 618, 4], [492, 524, 578, 4],
  [450, 522, 578, 7], [492, 578, 578, 2], [450, 555, 618, 7], [534, 622, 660, 7], [492, 570, 618, 4], [576, 642, 702, 7], [615, 692, 741, 11],
  [615, 674, 741, 4], [534, 570, 657, 11], [534, 576, 618, 7], [492, 540, 618, 4], [450, 498, 578, 4], [450, 510, 537, 4], [450, 500, 537, 4],
  [450, 486, 537, 4], [410, 472, 537, 7], [369, 386, 495, 7], [327, 367, 413, 7], [327, 368, 413, 7], [246, 292, 371, 11], [205, 267, 329, 7],
  [246, 298, 329, 4], [246, 298, 329, 7], [246, 356, 413, 11], [327, 387, 453, 7], [327, 345, 413, 4], [286, 345, 371, 4], [327, 388, 413, 4],
  [327, 390, 413, 2], [327, 420, 453, 4], [369, 453, 453, 2], [369, 400, 453, 4], [369, 443, 495, 7], [327, 413, 453, 7], [411, 443, 495, 4],
  [411, 495, 495, 2], [369, 415, 495, 4], [327, 415, 453, 4], [369, 408, 495, 7], [411, 495, 537, 7], [411, 453, 537, 7], [411, 486, 537, 4],
  [450, 507, 537, 4], [450, 512, 537, 4], [534, 578, 618, 7], [534, 594, 618, 7], [576, 638, 660, 4], [576, 618, 702, 7], [576, 627, 702, 7],
  [576, 624, 702, 7], [615, 684, 741, 11], [657, 732, 783, 11], [699, 741, 783, 4], [699, 774, 825, 7], [699, 783, 783, 2], [699, 726, 783, 4],
  [699, 862, 906, 7], [738, 796, 867, 4], [615, 672, 825, 7], [615, 648, 702, 4], [615, 675, 741, 7], [657, 699, 741, 4], [699, 741, 741, 2],
];

const redOf: Record<number, string> = { 2: '#2c0a0a', 4: '#6e0a0a', 7: '#b40c0c', 11: '#fa1010' };
const greenOf: Record<number, string> = { 2: '#0a2c0a', 4: '#0a6a14', 7: '#0ea80e', 11: '#10f010' };

const a8 = (p: number[][]) => p.map(([x, y]) => `${x / 2.613 - 10},${y / 3 - 50}`).join(' ');
const a9 = (p: number[][]) => p.map(([x, y]) => `${580 + x / 2.708},${y / 3 - 50}`).join(' ');

const upper = a8([[613, 437], [670, 425], [750, 406], [825, 406], [870, 428], [915, 452], [945, 470], [980, 472], [1010, 456], [1045, 450], [1100, 451], [1135, 460], [1170, 460], [1200, 450], [1320, 434], [1354, 390], [1390, 340], [1430, 310], [1480, 255], [1530, 215]]) + ' ' +
  a9([[0, 213], [30, 200], [60, 195], [130, 193], [165, 208], [230, 228], [290, 238], [385, 253], [470, 252], [520, 249], [590, 282], [650, 310], [720, 303], [800, 305], [860, 320], [945, 320], [985, 337], [1070, 358], [1140, 400], [1205, 450], [1300, 545]]);
const lower = a8([[613, 800], [640, 800], [750, 765], [820, 720], [860, 670], [915, 612], [950, 590], [985, 590], [1060, 650], [1090, 657], [1270, 658], [1330, 670], [1420, 692], [1460, 725], [1510, 735]]) + ' ' +
  a9([[0, 733], [65, 710], [110, 660], [165, 598], [230, 545], [320, 497], [385, 478], [450, 478], [520, 500], [590, 508], [650, 520], [690, 540], [750, 595], [815, 655], [880, 690], [945, 745], [1000, 790], [1070, 830], [1137, 870], [1190, 865], [1300, 838]]);
const midLine = a8([[613, 620], [700, 595], [790, 578], [860, 555], [900, 537], [975, 530], [1030, 540], [1090, 555], [1170, 560], [1300, 548], [1420, 515], [1520, 475]]) + ' ' +
  a9([[0, 472], [50, 460], [130, 418], [190, 390], [260, 375], [370, 365], [460, 365], [530, 378], [650, 415], [720, 433], [810, 477], [890, 505], [980, 555], [1070, 595], [1110, 622], [1200, 658], [1300, 692]]);

const GridDots = ({ h, major }: { h: number; major: number[] }) => {
  const dots: ReactNode[] = [];
  for (let k = 0; k < 18; k++) {
    const x = 100.5 + 60 * k;
    const full = k % 2 === 1;
    for (let y = 5; y < h; y += full ? 13.75 : 27.5) dots.push(<rect key={`v${k}-${y}`} x={x} y={y} width="1.2" height="1.2" fill="#222" />);
  }
  major.forEach(my => {
    for (let x = 30; x < 1085; x += 12) dots.push(<rect key={`h${my}-${x}`} x={x} y={my} width="1.2" height="1.2" fill="#222" />);
  });
  return <>{dots}</>;
};

const PriceSvg = () => (
  <svg width="1089" height="264" className="block">
    <GridDots h={264} major={[45, 100, 155, 210]} />
    {bars.map(([t, s, b, w], i) => {
      const x = 232 + 12 * i - w / 2;
      return (
        <g key={i}>
          <rect x={x} y={t / 3 - 50} width={w} height={(s - t) / 3} fill={redOf[w]} />
          <rect x={x} y={s / 3 - 50} width={w} height={(b - s) / 3} fill={greenOf[w]} />
        </g>
      );
    })}
    <polyline points={upper} fill="none" stroke="#a01830" strokeWidth="1" />
    <polyline points={lower} fill="none" stroke="#a01830" strokeWidth="1" />
    <polyline points={midLine} fill="none" stroke="#101070" strokeWidth="1" />
  </svg>
);

// [top, bottom] of each volume bar, crop y
const vols: [number, number][] = [
  [103, 128], [105, 128], [96, 128], [105, 128], [115, 128], [112, 128], [105, 128], [115, 128], [96, 128], [87, 128], [110, 128], [102, 128], [105, 138], [108, 138],
  [108, 132], [108, 135], [105, 147], [104, 130], [108, 138], [108, 130], [110, 128], [112, 135], [118, 125], [108, 132], [107, 132], [96, 150], [111, 125], [100, 153],
  [108, 138], [110, 132], [96, 147], [96, 158], [104, 135], [66, 143], [96, 138], [105, 130], [106, 132], [112, 132], [110, 132], [110, 132], [96, 143], [90, 132], [93, 143],
  [99, 132], [48, 165], [93, 150], [108, 132], [105, 145], [100, 165], [100, 138], [96, 132], [112, 125], [114, 140], [108, 130], [114, 136], [114, 136], [110, 130], [100, 150],
  [108, 150], [112, 132], [108, 130], [108, 127], [110, 140], [96, 132], [104, 143], [100, 128], [110, 135], [112, 135], [114, 135], [96, 153], [104, 140], [108, 140],
  [90, 138], [84, 148], [98, 130], [75, 177], [90, 163], [112, 128], [98, 153], [115, 128], [110, 128], [105, 168], [105, 135], [84, 135], [105, 130], [100, 135], [108, 135], [120, 124],
];

const VolSvg = () => (
  <svg width="1089" height="64" className="block">
    <GridDots h={64} major={[16, 36, 56]} />
    {vols.map(([t, b], i) => (
      <g key={i}>
        <rect x={12 + 12 * i} y={t / 3 - 4} width="8" height={(122 - t) / 3} fill="#0c5c0c" />
        <rect x={12 + 12 * i} y={36.7} width="8" height={(b - 122) / 3} fill="#5c0a0a" />
      </g>
    ))}
  </svg>
);

const z10 = (p: number[][]) => p.map(([x, y]) => `${x / 1.341 - 10},${y / 3 - 69}`).join(' ');

const bvRed = z10([[38, 252], [52, 252], [68, 290], [84, 310], [100, 425], [115, 455], [132, 447], [165, 490], [180, 460], [195, 465], [212, 484], [245, 462], [262, 490], [278, 475], [293, 440], [310, 458], [345, 458], [372, 480], [388, 497], [420, 507], [436, 468], [455, 490], [470, 440], [500, 405], [518, 408], [535, 350], [553, 380], [583, 380], [600, 410], [617, 463], [632, 463], [660, 498], [680, 475], [695, 482], [727, 445], [745, 385], [760, 370], [790, 358], [808, 312], [840, 404], [870, 407], [890, 482], [920, 482], [935, 480], [950, 465], [967, 415], [985, 425], [1000, 426], [1020, 438], [1035, 458], [1050, 490], [1070, 465], [1100, 450], [1115, 450], [1145, 425], [1175, 392], [1195, 388], [1210, 382], [1228, 410], [1260, 305], [1275, 315], [1293, 305], [1308, 318], [1325, 410], [1340, 408], [1357, 397], [1372, 428], [1388, 428], [1405, 402], [1420, 465], [1436, 485]]);
const bvGreen = z10([[38, 410], [52, 392], [84, 392], [100, 435], [115, 458], [132, 458], [150, 495], [165, 480], [180, 430], [212, 412], [228, 392], [262, 458], [278, 458], [305, 477], [340, 470], [372, 485], [388, 505], [420, 508], [436, 480], [455, 480], [470, 455], [518, 458], [535, 432], [550, 440], [568, 355], [585, 348], [600, 360], [630, 398], [648, 485], [665, 485], [695, 430], [712, 395], [727, 375], [745, 262], [760, 262], [780, 312], [795, 325], [808, 322], [825, 425], [860, 432], [885, 465], [920, 535], [950, 495], [1000, 456], [1020, 465], [1035, 488], [1050, 465], [1065, 465], [1085, 445], [1115, 450], [1132, 482], [1145, 455], [1178, 488], [1210, 392], [1228, 400], [1260, 285], [1275, 325], [1308, 385], [1340, 470], [1357, 458], [1388, 428], [1405, 408], [1420, 405], [1436, 436]]);

const BaVolSvg = () => (
  <svg width="1089" height="120" className="block">
    <GridDots h={120} major={[32, 63, 94]} />
    <polyline points={bvRed} fill="none" stroke="#c01818" strokeWidth="1.6" />
    <polyline points={bvGreen} fill="none" stroke="#3ed02a" strokeWidth="1.8" />
  </svg>
);

const times = ['19-11:09', '19-11:22', '19-11:32', '19-11:45', '19-11:52', '19-12:04', '19-12:12', '19-12:27'];

const axisLabels = [
  { t: '2156.00', y: 35, c: 'text-[#222]' },
  { t: '2155.00', y: 90, c: 'text-[#222]' },
  { t: '2154.44', y: 123, c: 'bg-[#f02020] text-white' },
  { t: '2154.00', y: 145, c: 'text-[#222]' },
  { t: '2153.55', y: 172, c: 'bg-[#1010e0] text-white' },
  { t: '2153.00', y: 200, c: 'text-[#222]' },
  { t: '2152.66', y: 221, c: 'bg-[#f02020] text-white' },
  { t: '2500', y: 274, c: 'text-[#222]' },
  { t: '-23', y: 292, c: 'bg-[#5c0a0a] text-white' },
  { t: '-2500', y: 308, c: 'text-[#222]' },
  { t: '7500', y: 352, c: 'text-[#222]' },
  { t: '5000', y: 382, c: 'text-[#222]' },
  { t: '3884', y: 397, c: 'bg-[#10e010] text-[#222]' },
  { t: '2610', y: 414, c: 'bg-[#f02020] text-white' },
];

const chartTabs = [
  { t: 'EPU6 : TF, 5 Bars', c: 'w-[96px] bg-gradient-to-b from-[#e8e8e8] to-[#cfcfcf] text-[#555] border-t-2 border-[#e2a820]' },
  { t: 'ZCEZ6,765', c: 'w-[64px] bg-[#5e5e5e] text-[#ccc] border-t border-[#ddd]' },
  { t: 'EPM6 : TF, 1 Bar', c: 'w-[91px] bg-[#5e5e5e] text-[#ccc] border-t border-[#ddd]' },
  { t: 'EPM6 : PF 3x3, Ticks', c: 'w-[111px] bg-[#5e5e5e] text-[#ccc] border-t border-[#ddd]' },
  { t: '+', c: 'w-[23px] bg-[#5e5e5e] text-[#ccc] border-t border-[#ddd]' },
];

const OrderBook = () => (
  <div className="absolute left-0 top-[80px] w-[223px] h-[182px] bg-white border-2 border-black text-[#222] text-[13px] leading-[16px]">
    <div className="h-[19px] border-b-2 border-black flex items-center justify-between px-[3px] text-[13px]">
      Order Book
      <span className="text-[8px] font-bold text-[#444]">CLOSE</span>
    </div>
    <div className="pl-[4px] pt-[5px]">
      <div>TS8579 (DEMO8579: Demo)</div>
      <div>Long 5 @ 2153.75</div>
      <div className="mt-[16px]">P/L: 0.00</div>
      <div>OTE+P/L: (125.00)</div>
    </div>
    <div className="flex items-center pl-[9px] pr-[9px] mt-[8px]">
      <div className="w-0 h-0 border-l-[4px] border-r-[4px] border-t-[7px] border-l-transparent border-r-transparent border-t-black" />
      <span className="ml-[2px] font-bold text-[16px]">Working orders</span>
      <span className="ml-auto text-[13px]">X All (2)</span>
    </div>
    <div className="flex items-center pl-[2px] pr-[8px] mt-[11px] text-[10px] text-[#333] whitespace-pre">
      <LmtBadge size={15} />
      <span className="ml-[6px]">Sell  5  @  2156.00  LMT DAY</span>
      <span className="ml-auto font-bold text-[12px] text-black">X</span>
    </div>
    <div className="flex items-center pl-[2px] pr-[8px] mt-[3px] text-[10px] text-[#333] whitespace-pre">
      <StopSign size={15} />
      <span className="ml-[6px]">Sell  5  @  2151.50  STP DAY</span>
      <span className="ml-auto font-bold text-[12px] text-black">X</span>
    </div>
  </div>
);

const ChartWindow = () => (
  <div className="flex flex-col h-full">
    <div className="h-[26px] bg-gradient-to-b from-[#8a8a8a] to-[#9c9c9c] border-b-2 border-[#555] flex items-end text-[11px] whitespace-nowrap">
      {chartTabs.map(t => <div key={t.t} className={`${t.c} h-[20px] leading-[18px] text-center mr-[2px] rounded-t-[2px]`}>{t.t}</div>)}
    </div>
    <div className="flex flex-1 bg-white">
      <div className="w-[1089px] shrink-0 flex flex-col">
        <div className="relative h-[264px] border-l border-[#222] border-t-2 border-t-black overflow-hidden">
          <PriceSvg />
          <div className="absolute left-[1px] top-0 text-[13px] leading-[13px] tracking-[1px] text-[#222] whitespace-pre">
            <div>O=2160.00</div><div>H=2160.75</div><div>L=2151.25</div><div>L=2153.25</div><div>Δ=   -6.75</div>
          </div>
          <OrderBook />
        </div>
        <div className="relative h-[64px] border-l border-[#222] border-t-2 border-t-black overflow-hidden">
          <VolSvg />
          <div className="absolute left-[1px] top-0 text-[13px] tracking-[1px] leading-[13px] text-[#333]">Vol</div>
          <div className="absolute left-0 bottom-0 w-[154px] h-[29px] bg-white border border-[#888] text-[12px] leading-[14px] tracking-[1px] text-[#333] px-[1px]">
            <div className="flex justify-between"><span>VolAsk=</span><span>10</span></div>
            <div className="flex justify-between"><span>VolBidNeg=</span><span>-23</span></div>
          </div>
        </div>
        <div className="relative h-[121px] border-l border-[#222] border-t-2 border-t-black border-b border-b-black overflow-hidden">
          <BaVolSvg />
          <div className="absolute left-[1px] top-0 text-[13px] leading-[13px] tracking-[1px] text-[#333]">BAVolCr^</div>
        </div>
        <div className="flex h-[19px] pl-[100.5px] text-[13px] leading-[19px] tracking-[1px] text-[#222] border-l border-[#222]">
          {times.map(t => <div key={t} className="w-[120px] h-[15px] leading-[17px] border-l border-[#222] pl-[2px]">{t}</div>)}
        </div>
      </div>
      <div className="relative w-[60px] border-l-2 border-black">
        {axisLabels.map(a => (
          <div key={a.t} className={`absolute left-0 w-[60px] h-[15px] text-right pr-[2px] text-[13px] leading-[15px] tracking-[1px] ${a.c}`} style={{ top: a.y }}>{a.t}</div>
        ))}
      </div>
    </div>
  </div>
);

// ---- window frame

const Win = ({ pos, title, bar, body, dot, children, noBtns }: { pos: string; title: string; bar: string; body: string; dot?: boolean; noBtns?: boolean; children: ReactNode }) => (
  <div className={`absolute ${pos} bg-gradient-to-b from-[#d6e3f0] to-[#e8eff6] border-l border-[#7f8fa0] rounded-tl-[4px] flex flex-col overflow-hidden`}>
    <div className={`${bar} shrink-0 flex items-center gap-[3px] text-[#555] whitespace-nowrap`}>
      <WinIcon />
      <span className="truncate flex-1 whitespace-pre">{title}</span>
      {!noBtns && <WinButtons dot={dot} />}
    </div>
    <div className={`${body} flex-1 min-h-0`}>{children}</div>
  </div>
);

export default function App() {
  return (
    <div className="w-[1919px] h-[1076px] overflow-hidden bg-[#dbe5ef] font-['Liberation_Sans',Arial,sans-serif] flex flex-col">
      <TopBars />
      <div className="flex flex-1 min-h-0">
        <SideBar />
        <div className="relative flex-1">
          <Win pos="left-[2px] top-[3px] w-[289px] h-[1026px]" title="TS8579 - EPU6" bar="h-[29px] pl-[9px] pr-[5px] text-[11px]" body="pl-[9px] pr-[5px] pb-[8px]" dot>
            <TradeWindow />
          </Win>
          <Win pos="left-[291px] top-[3px] w-[1102px] h-[497px]" title="Spreadsheet Trader: TS8579 (DEMO8579: Demo) - EPU6, ENQU6, GCEQ6..." bar="h-[29px] pl-[8px] pr-[10px] text-[11px]" body="pl-[8px] pb-[9px]">
            <SheetWindow />
          </Win>
          <Win pos="left-[1379px] top-[3px] w-[464px] h-[497px]" title="Orders and Positions: GW: demo185450 - DEMO8579 OTE+PL: (125.00)" bar="h-[29px] pl-[8px] pr-[5px] text-[12px]" body="pl-[8px] pr-[2px]" noBtns>
            <OrdersWindow />
          </Win>
          <Win pos="left-[291px] top-[500px] w-[383px] h-[529px]" title="Instrument Monitor: EPU6 - E-Mini S&P 500,..." bar="h-[28px] pl-[8px] pr-[10px] text-[12px]" body="pl-[8px] pr-[8px] pb-[7px]">
            <MonitorWindow />
          </Win>
          <Win pos="left-[674px] top-[500px] w-[1169px] h-[529px]" title="[5 Long, 2 Orders]  EPU6 - E-Mini S&P 500, Sep 16,  Primary Session : TFlow, 5 Bars" bar="h-[28px] pl-[10px] pr-[12px] text-[11.5px]" body="pl-[10px] pb-[8px]" dot>
            <ChartWindow />
          </Win>
        </div>
      </div>
    </div>
  );
}
